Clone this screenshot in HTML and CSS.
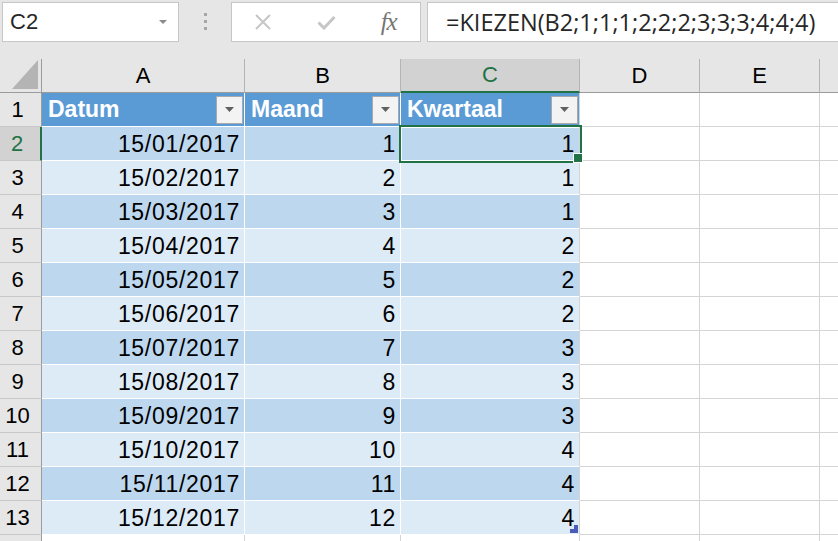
FILE: index.html
```html
<!DOCTYPE html>
<html lang="nl">

<head>
    <meta charset="UTF-8">
    <meta name="viewport" content="width=device-width, initial-scale=1.0">
    <title>KIEZEN</title>

    <link rel="stylesheet" href="styles.css">
</head>

<body>
    <header class="topbar">
        <div class="namebox">
            <span>C2</span>
            <svg width="8" height="4" viewBox="0 0 8 4"><path d="M0 0h8L4 4z" fill="#8a8a8a" /></svg>
        </div>
        <div class="grip"><i></i><i></i><i></i></div>
        <div class="fxbtns">
            <span class="slot">
                <svg width="16" height="16" viewBox="0 0 16 16"><path d="M1 1L15 15M15 1L1 15" stroke="#c6c6c6" stroke-width="2" /></svg>
            </span>
            <span class="slot">
                <svg width="19" height="15" viewBox="0 0 19 15"><path d="M1.5 7.5L7 13L17.5 2" stroke="#c6c6c6" stroke-width="3" fill="none" /></svg>
            </span>
            <span class="slot fx">fx</span>
        </div>
        <div class="formula">=KIEZEN(B2;1;1;1;2;2;2;3;3;3;4;4;4)</div>
    </header>

    <main class="sheet">
        <!-- kolomkoppen -->
        <div class="corner"><svg width="26" height="29" viewBox="0 0 26 29"><path d="M26 0V29H0z" fill="#b4b4b4" /></svg></div>
        <div class="ch">A</div>
        <div class="ch">B</div>
        <div class="ch sel">C</div>
        <div class="ch">D</div>
        <div class="ch">E</div>
        <div class="ch"></div>

        <!-- tabelkop -->
        <div class="rh">1</div>
        <div class="c t hd">Datum<span class="flt"><svg width="9" height="5" viewBox="0 0 9 5"><path d="M0 0h9L4.5 5z" fill="#606060" /></svg></span></div>
        <div class="c t hd">Maand<span class="flt"><svg width="9" height="5" viewBox="0 0 9 5"><path d="M0 0h9L4.5 5z" fill="#606060" /></svg></span></div>
        <div class="c t hd lastc">Kwartaal<span class="flt"><svg width="9" height="5" viewBox="0 0 9 5"><path d="M0 0h9L4.5 5z" fill="#606060" /></svg></span></div>
        <div class="c"></div><div class="c"></div><div class="c"></div>

        <div class="rh sel">2</div>
        <div class="c t dark">15/01/2017</div><div class="c t dark">1</div><div class="c t dark lastc cur">1</div>
        <div class="c"></div><div class="c"></div><div class="c"></div>

        <div class="rh">3</div>
        <div class="c t light">15/02/2017</div><div class="c t light">2</div><div class="c t light lastc">1</div>
        <div class="c"></div><div class="c"></div><div class="c"></div>

        <div class="rh">4</div>
        <div class="c t dark">15/03/2017</div><div class="c t dark">3</div><div class="c t dark lastc">1</div>
        <div class="c"></div><div class="c"></div><div class="c"></div>

        <div class="rh">5</div>
        <div class="c t light">15/04/2017</div><div class="c t light">4</div><div class="c t light lastc">2</div>
        <div class="c"></div><div class="c"></div><div class="c"></div>

        <div class="rh">6</div>
        <div class="c t dark">15/05/2017</div><div class="c t dark">5</div><div class="c t dark lastc">2</div>
        <div class="c"></div><div class="c"></div><div class="c"></div>

        <div class="rh">7</div>
        <div class="c t light">15/06/2017</div><div class="c t light">6</div><div class="c t light lastc">2</div>
        <div class="c"></div><div class="c"></div><div class="c"></div>

        <div class="rh">8</div>
        <div class="c t dark">15/07/2017</div><div class="c t dark">7</div><div class="c t dark lastc">3</div>
        <div class="c"></div><div class="c"></div><div class="c"></div>

        <div class="rh">9</div>
        <div class="c t light">15/08/2017</div><div class="c t light">8</div><div class="c t light lastc">3</div>
        <div class="c"></div><div class="c"></div><div class="c"></div>

        <div class="rh">10</div>
        <div class="c t dark">15/09/2017</div><div class="c t dark">9</div><div class="c t dark lastc">3</div>
        <div class="c"></div><div class="c"></div><div class="c"></div>

        <div class="rh">11</div>
        <div class="c t light">15/10/2017</div><div class="c t light">10</div><div class="c t light lastc">4</div>
        <div class="c"></div><div class="c"></div><div class="c"></div>

        <div class="rh">12</div>
        <div class="c t dark">15/11/2017</div><div class="c t dark">11</div><div class="c t dark lastc">4</div>
        <div class="c"></div><div class="c"></div><div class="c"></div>

        <div class="rh">13</div>
        <div class="c t light">15/12/2017</div><div class="c t light">12</div><div class="c t light lastc end">4</div>
        <div class="c"></div><div class="c"></div><div class="c"></div>

        <div class="rh"></div>
        <div class="c"></div><div class="c"></div><div class="c"></div>
        <div class="c"></div><div class="c"></div><div class="c"></div>
    </main>
</body>

</html>
```

FILE: styles.css
```css
* {
    box-sizing: border-box;
}

body {
    margin: 0;
    width: 838px;
    height: 541px;
    overflow: hidden;
    background: #fff;
    font-family: "Liberation Sans", Arial, sans-serif;
    color: #000;
}

/* formulebalk */

.topbar {
    height: 59px;
    background: #e6e6e6;
    display: flex;
    align-items: flex-start;
    padding: 2px 0 0 2px;
}

.namebox {
    width: 177px;
    height: 40px;
    background: #fff;
    border: 1px solid #c6c6c6;
    display: flex;
    align-items: center;
    justify-content: space-between;
    padding: 0 11px 0 7px;
    font-size: 22px;
    color: #262626;
}

.grip {
    width: 52px;
    display: flex;
    flex-direction: column;
    align-items: center;
    gap: 4px;
    padding-top: 11px;
}

.grip i {
    width: 3px;
    height: 3px;
    background: #a6a6a6;
}

.fxbtns {
    width: 190px;
    height: 40px;
    background: #fff;
    border: 1px solid #c6c6c6;
    display: flex;
    align-items: center;
}

.slot {
    width: 63px;
    display: flex;
    justify-content: center;
    align-items: center;
}

.fx {
    font-family: "Liberation Serif", serif;
    font-style: italic;
    font-size: 25px;
    color: #767676;
    letter-spacing: -1px;
}

.formula {
    flex: 1;
    height: 40px;
    margin-left: 6px;
    background: #fff;
    border: 1px solid #c6c6c6;
    border-right: none;
    padding-left: 18px;
    display: flex;
    align-items: center;
    font-family: "Open Sans", sans-serif;
    font-size: 23.5px;
    color: #262626;
    white-space: nowrap;
}

/* werkblad */

.sheet {
    display: grid;
    grid-template-columns: 42px 203px 156px 179px 120px 120px 120px;
    grid-auto-rows: 34px;
    width: 940px;
}

.c {
    display: flex;
    align-items: center;
    justify-content: flex-end;
    padding: 1px 4px 0 4px;
    border-right: 1px solid #d4d4d4;
    border-bottom: 1px solid #d4d4d4;
    font-size: 23px;
    letter-spacing: 0.7px;
    white-space: nowrap;
}

.corner {
    display: flex;
    align-items: flex-end;
    justify-content: flex-end;
    padding: 0 3px 3px 0;
    background: #e6e6e6;
    border-right: 1px solid #9b9b9b;
    border-bottom: 1px solid #9b9b9b;
}

.ch {
    display: flex;
    align-items: center;
    justify-content: center;
    background: #e6e6e6;
    border-right: 1px solid #b4b4b4;
    border-bottom: 1px solid #9b9b9b;
    font-size: 22px;
}

.ch.sel {
    background: #d2d2d2;
    color: #217346;
    border-bottom: 2px solid #217346;
}

.rh {
    display: flex;
    align-items: center;
    justify-content: center;
    padding: 1px 6px 0 0;
    background: #e6e6e6;
    border-right: 1px solid #9b9b9b;
    border-bottom: 1px solid #c8c8c8;
    font-size: 22px;
}

.rh.sel {
    background: #d2d2d2;
    color: #217346;
    border-right: 2px solid #217346;
}

/* tabel */

.t {
    border-right-color: #fff;
    border-bottom-color: #fff;
}

.t.lastc {
    border-right-color: #d4d4d4;
}

.hd {
    background: #5b9bd5;
    color: #fff;
    font-weight: bold;
    letter-spacing: 0;
    justify-content: space-between;
    padding: 0 1px 0 6px;
}

.flt {
    width: 27px;
    height: 28px;
    background: #f3f3f3;
    border: 1px solid #a9a9a9;
    display: flex;
    align-items: center;
    justify-content: center;
}

.dark {
    background: #bdd7ee;
}

.light {
    background: #ddebf7;
}

.cur {
    position: relative;
    outline: 2px solid #217346;
    box-shadow: inset 1px 1px 0 #fff;
    border-right-color: #fff;
}

.cur::after {
    content: "";
    position: absolute;
    right: -4px;
    bottom: -3px;
    width: 8px;
    height: 8px;
    background: #217346;
    border: 1px solid #fff;
}

.end {
    position: relative;
}

.end::after {
    content: "";
    position: absolute;
    right: 1px;
    bottom: 1px;
    width: 8px;
    height: 8px;
    background: #4a5bb8;
    clip-path: polygon(50% 0, 100% 0, 100% 100%, 0 100%, 0 50%, 50% 50%);
}
```
